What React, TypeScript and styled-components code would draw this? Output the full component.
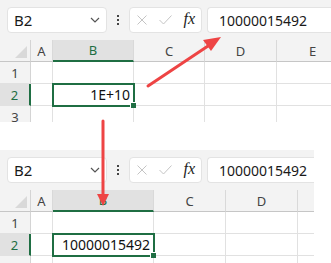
import React from 'react';
import styled, { createGlobalStyle } from 'styled-components';

const GlobalStyle = createGlobalStyle`
  body {
    margin: 0;
    background: #ffffff;
    font-family: 'Segoe UI', 'Noto Sans', 'Open Sans', sans-serif;
  }
`;

const green = '#1f6e43';

const Page = styled.div`
  position: relative;
  width: 331px;
  height: 263px;
  overflow: hidden;
  display: flex;
  flex-direction: column;
  gap: 28px;
`;

const Sheet = styled.div<{ $width: number; $height: number }>`
  width: ${(p) => p.$width}px;
  height: ${(p) => p.$height}px;
  overflow: hidden;
  background: #f3f3f3;
  display: flex;
  flex-direction: column;
`;

const Toolbar = styled.div`
  height: 40px;
  box-sizing: border-box;
  padding: 7px 0 7px 7px;
  display: flex;
  align-items: stretch;
  flex-shrink: 0;
`;

const Box = styled.div`
  background: #fff;
  border: 1px solid #e3e3e3;
  border-radius: 4px;
  box-sizing: border-box;
  display: flex;
  align-items: center;
`;

const NameBox = styled(Box)`
  width: 100px;
  padding: 0 0 0 6px;
  font-size: 15px;
  color: #1a1a1a;
  justify-content: space-between;
`;

const Chevron = styled.svg`
  width: 10px;
  height: 6px;
  margin-right: 6px;
`;

const Dots = styled.div`
  width: 22px;
  display: flex;
  flex-direction: column;
  align-items: center;
  justify-content: center;
  gap: 2px;
  span {
    width: 2px;
    height: 2px;
    background: #444;
  }
`;

const FxBox = styled(Box)`
  width: 73px;
  padding: 0 6px 0 7px;
  justify-content: space-between;
`;

const Fx = styled.span`
  font-family: 'Liberation Serif', 'DejaVu Serif', serif;
  font-style: italic;
  font-size: 16px;
  color: #222;
  margin-top: -2px;
`;

const FormulaBar = styled(Box)`
  flex: 1;
  margin-left: 5px;
  padding-left: 11px;
  font-size: 14px;
  color: #1a1a1a;
  border-right: none;
  border-top-right-radius: 0;
  border-bottom-right-radius: 0;
`;

const Grid = styled.div<{ $cols: string }>`
  display: grid;
  grid-template-columns: ${(p) => p.$cols};
  grid-auto-rows: 22px;
  background: #fff;
  flex: 1;
`;

const Corner = styled.div`
  background: #f3f3f3;
  border-right: 1px solid #d4d4d4;
  border-bottom: 1px solid #c6c6c6;
  position: relative;
  &::after {
    content: '';
    position: absolute;
    right: 3px;
    bottom: 3px;
    border-left: 12px solid transparent;
    border-bottom: 12px solid #d9d9d9;
  }
`;

const ColHead = styled.div<{ $active?: boolean }>`
  background: ${(p) => (p.$active ? '#e1e1e1' : '#f3f3f3')};
  border-right: 1px solid #d9d9d9;
  border-bottom: ${(p) => (p.$active ? `2px solid ${green}` : '1px solid #c6c6c6')};
  color: ${(p) => (p.$active ? green : '#444')};
  font-size: 13px;
  display: flex;
  align-items: center;
  justify-content: center;
`;

const RowHead = styled.div<{ $active?: boolean }>`
  background: ${(p) => (p.$active ? '#e1e1e1' : '#f3f3f3')};
  border-right: ${(p) => (p.$active ? `2px solid ${green}` : '1px solid #d4d4d4')};
  border-bottom: 1px solid #e1e1e1;
  color: ${(p) => (p.$active ? green : '#444')};
  font-size: 13px;
  display: flex;
  align-items: center;
  justify-content: center;
`;

const Cell = styled.div<{ $selected?: boolean }>`
  position: relative;
  border-right: 1px solid #e1e1e1;
  border-bottom: 1px solid #e1e1e1;
  font-size: 14px;
  color: #111;
  display: flex;
  align-items: center;
  justify-content: flex-end;
  padding-right: 3px;
  ${(p) =>
    p.$selected &&
    `
    z-index: 1;
    outline: 2px solid ${green};
    outline-offset: -1px;
    &::after {
      content: '';
      position: absolute;
      right: -3px;
      bottom: -3px;
      width: 5px;
      height: 5px;
      background: ${green};
      border-left: 1px solid #fff;
      border-top: 1px solid #fff;
    }
  `}
`;

const Arrows = styled.svg`
  position: absolute;
  left: 0;
  top: 0;
  pointer-events: none;
`;

const SheetView = ({
  width,
  height,
  cols,
  colNames,
  value,
  display,
}: {
  width: number;
  height: number;
  cols: string;
  colNames: string[];
  value: string;
  display: string;
}) => (
  <Sheet $width={width} $height={height}>
    <Toolbar>
      <NameBox>
        B2
        <Chevron viewBox="0 0 10 6">
          <path d="M1 1 L5 5 L9 1" fill="none" stroke="#555" strokeWidth="1.2" />
        </Chevron>
      </NameBox>
      <Dots>
        <span />
        <span />
        <span />
      </Dots>
      <FxBox>
        <svg width="10" height="10" viewBox="0 0 10 10">
          <path d="M0.5 0.5 L9.5 9.5 M9.5 0.5 L0.5 9.5" stroke="#c4c4c4" strokeWidth="1" />
        </svg>
        <svg width="13" height="10" viewBox="0 0 13 10">
          <path d="M0.5 5 L4.5 9 L12.5 0.5" fill="none" stroke="#c4c4c4" strokeWidth="1" />
        </svg>
        <Fx>fx</Fx>
      </FxBox>
      <FormulaBar>{value}</FormulaBar>
    </Toolbar>
    <Grid $cols={cols}>
      <Corner />
      {colNames.map((c) => (
        <ColHead key={c} $active={c === 'B'}>
          {c}
        </ColHead>
      ))}
      {[1, 2, 3].map((r) => (
        <React.Fragment key={r}>
          <RowHead $active={r === 2}>{r}</RowHead>
          {colNames.map((c) => (
            <Cell key={c} $selected={r === 2 && c === 'B'}>
              {r === 2 && c === 'B' ? display : ''}
            </Cell>
          ))}
        </React.Fragment>
      ))}
    </Grid>
  </Sheet>
);

const App = () => (
  <>
    <GlobalStyle />
    <Page>
      <SheetView
        width={331}
        height={122}
        cols="31px 22px 81px 71px 72px 72px"
        colNames={['A', 'B', 'C', 'D', 'E']}
        value="10000015492"
        display="1E+10"
      />
      <SheetView
        width={314}
        height={113}
        cols="31px 22px 101px 72px 72px 72px"
        colNames={['A', 'B', 'C', 'D', 'E']}
        value="10000015492"
        display="10000015492"
      />
      <Arrows width="331" height="263" viewBox="0 0 331 263">
        <line x1="148" y1="86" x2="208" y2="46" stroke="#ee4444" strokeWidth="3" strokeLinecap="round" />
        <polygon points="221,37 203,40 211,51" fill="#ee4444" />
        <line x1="103" y1="121" x2="103" y2="195" stroke="#ee4444" strokeWidth="3" strokeLinecap="round" />
        <polygon points="97,194 109,194 103,206" fill="#ee4444" />
      </Arrows>
    </Page>
  </>
);

export default App;
